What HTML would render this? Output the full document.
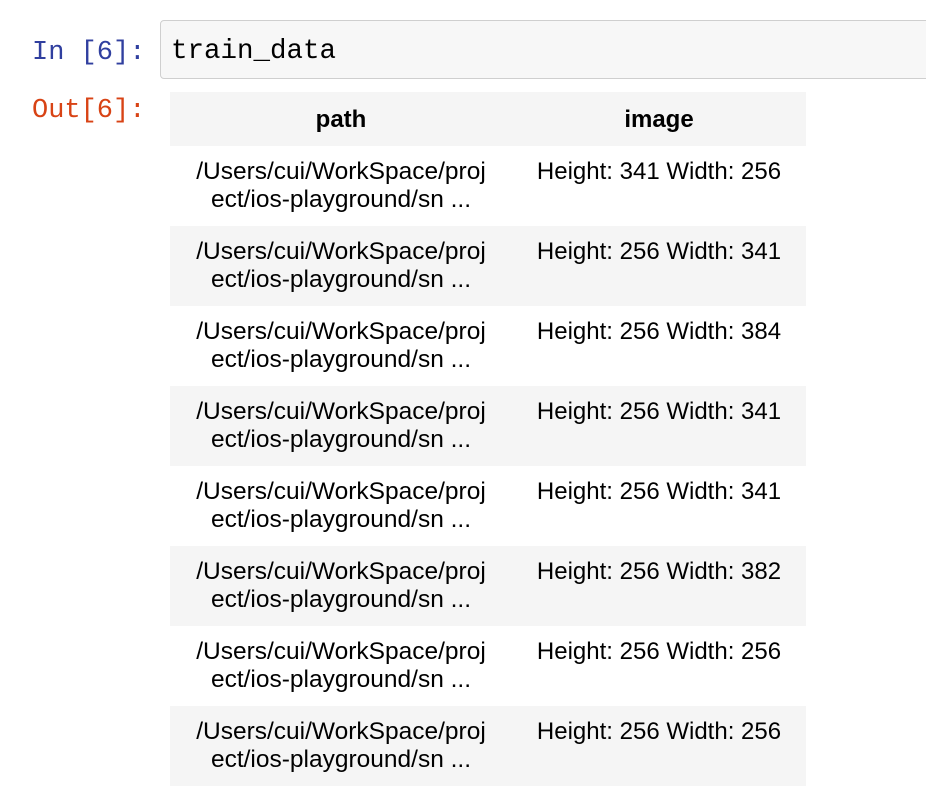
<!DOCTYPE html>
<html><head><style>
body{margin:0;background:#fff;width:926px;height:760px;overflow:hidden;position:relative;font-family:"Liberation Sans",sans-serif}
.p{position:absolute;font-family:"Liberation Mono",monospace;font-size:27px}
.in{left:32px;top:38px;color:#303f9f}
.out{left:32px;top:96px;color:#d84315}
.box{position:absolute;left:160px;top:20px;width:780px;height:59px;border:1px solid #cfcfcf;border-radius:4px;background:#f7f7f7;box-sizing:border-box}
.box span{position:absolute;left:10px;top:15px;font-family:"Liberation Mono",monospace;font-size:27.5px;color:#000}
table{position:absolute;left:170px;top:92px;border-collapse:collapse;font-size:24.5px;color:#000}
td,th{text-align:center;padding:0;vertical-align:top;line-height:28px}
th{height:54px;box-sizing:border-box;vertical-align:middle;font-weight:bold;font-size:24px;padding-top:2px}
td{height:80px;padding-top:12px;box-sizing:border-box}
td.c2{font-size:24px}
tr.g{background:#f5f5f5}
.c1{width:342px}.c2{width:294px}
</style></head><body>
<div class="p in">In&nbsp;[6]:</div>
<div class="box"><span>train_data</span></div>
<div class="p out">Out[6]:</div>
<table>
<tr class="g"><th class="c1">path</th><th class="c2">image</th></tr>
<tr><td class="c1">/Users/cui/WorkSpace/proj<br>ect/ios-playground/sn ...</td><td class="c2">Height: 341 Width: 256</td></tr>
<tr class="g"><td class="c1">/Users/cui/WorkSpace/proj<br>ect/ios-playground/sn ...</td><td class="c2">Height: 256 Width: 341</td></tr>
<tr><td class="c1">/Users/cui/WorkSpace/proj<br>ect/ios-playground/sn ...</td><td class="c2">Height: 256 Width: 384</td></tr>
<tr class="g"><td class="c1">/Users/cui/WorkSpace/proj<br>ect/ios-playground/sn ...</td><td class="c2">Height: 256 Width: 341</td></tr>
<tr><td class="c1">/Users/cui/WorkSpace/proj<br>ect/ios-playground/sn ...</td><td class="c2">Height: 256 Width: 341</td></tr>
<tr class="g"><td class="c1">/Users/cui/WorkSpace/proj<br>ect/ios-playground/sn ...</td><td class="c2">Height: 256 Width: 382</td></tr>
<tr><td class="c1">/Users/cui/WorkSpace/proj<br>ect/ios-playground/sn ...</td><td class="c2">Height: 256 Width: 256</td></tr>
<tr class="g"><td class="c1">/Users/cui/WorkSpace/proj<br>ect/ios-playground/sn ...</td><td class="c2">Height: 256 Width: 256</td></tr>
</table>
</body></html>
